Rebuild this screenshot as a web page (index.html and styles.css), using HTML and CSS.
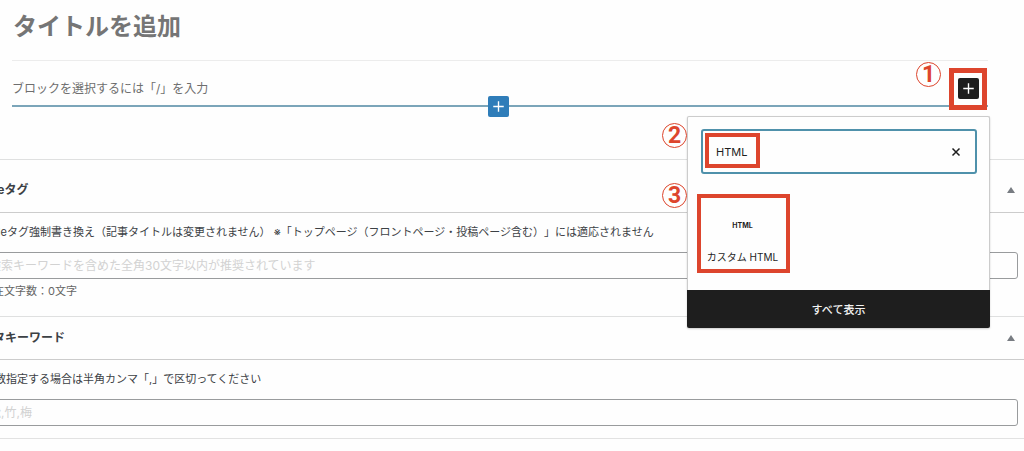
FILE: index.html
```html
<!DOCTYPE html>
<html lang="ja">
<head>
<meta charset="utf-8">
<meta name="viewport" content="width=device-width, initial-scale=1">
<title>投稿を編集</title>
<link rel="stylesheet" href="styles.css">
</head>
<body>
<main class="page">
  <section class="editor">
    <h1 class="post-title">タイトルを追加</h1>
    <div class="block-row">
      <p class="block-prompt">ブロックを選択するには「/」を入力</p>
      <span class="step step-one">1</span>
      <button class="add add-dark marked" type="button" aria-label="ブロックを追加">
        <svg viewBox="0 0 20 20" aria-hidden="true"><path d="M10 5v10M5 10h10"/></svg>
      </button>
      <button class="add add-blue" type="button" aria-label="ここにブロックを追加">
        <svg viewBox="0 0 20 20" aria-hidden="true"><path d="M10 5v10M5 10h10"/></svg>
      </button>
      <div class="inserter">
        <span class="step step-two">2</span>
        <span class="step step-three">3</span>
        <div class="inserter-body">
          <div class="search">
            <input class="search-input" type="text" value="HTML" aria-label="ブロックを検索">
            <button class="clear" type="button" aria-label="検索をリセット">
              <svg viewBox="0 0 10 10" aria-hidden="true"><path d="M1.5 1.5l7 7M8.5 1.5l-7 7"/></svg>
            </button>
          </div>
          <button class="result marked" type="button">
            <span class="result-icon" aria-hidden="true">HTML</span>
            <span>カスタム HTML</span>
          </button>
        </div>
        <button class="show-all" type="button">すべて表示</button>
      </div>
    </div>
  </section>

  <div class="metaboxes">
    <section class="metabox">
      <header class="metabox-head metabox-head-first">
        <h2 class="metabox-title">titleタグ</h2>
        <button class="toggle" type="button" aria-label="パネルを閉じる"><svg viewBox="0 0 8 6" aria-hidden="true"><path d="M4 0l4 6H0z"/></svg></button>
      </header>
      <div class="metabox-body">
        <label class="field-label" for="title-tag">titleタグ強制書き換え（記事タイトルは変更されません） ※「トップページ（フロントページ・投稿ページ含む）」には適応されません</label>
        <input class="field" id="title-tag" type="text" placeholder="検索キーワードを含めた全角30文字以内が推奨されています">
        <p class="count">現在文字数：0文字</p>
      </div>
    </section>
    <section class="metabox">
      <header class="metabox-head">
        <h2 class="metabox-title">メタキーワード</h2>
        <button class="toggle" type="button" aria-label="パネルを閉じる"><svg viewBox="0 0 8 6" aria-hidden="true"><path d="M4 0l4 6H0z"/></svg></button>
      </header>
      <div class="metabox-body">
        <label class="field-label" for="keywords">複数指定する場合は半角カンマ「,」で区切ってください</label>
        <input class="field" id="keywords" type="text" placeholder="松,竹,梅">
      </div>
    </section>
  </div>
</main>
</body>
</html>
```
FILE: styles.css
```css
*,
*::after {
  box-sizing: border-box;
}

body {
  margin: 0;
  background: #fefefe;
  color: #3c4145;
  font-family: Inter, "Noto Sans CJK JP", sans-serif;
  font-size: 11px;
  text-spacing-trim: space-all;
  overflow: hidden;
}

button,
input {
  font: inherit;
  color: inherit;
}

button {
  padding: 0;
  border: 0;
  background: none;
}

svg {
  display: block;
}

.page {
  overflow: hidden;
}

.editor {
  padding: 0 36px 52px 12px;
}

.post-title {
  margin: 0;
  padding: 9px 1px 15px;
  border-bottom: 1px solid #ececec;
  color: #757575;
  font-size: 24px;
  font-weight: 700;
  line-height: 36px;
}

.block-row {
  position: relative;
  display: flex;
  align-items: center;
  height: 46px;
  padding: 0 9px 0 0;
  border-bottom: 2px solid #7ba5b9;
  color: #6e6e6e;
}

.block-prompt {
  flex: 1;
  margin: 0;
  padding-top: 12px;
  font-size: 12px;
  line-height: 18px;
}

.add {
  display: grid;
  place-items: center;
  width: 21px;
  height: 21px;
  border-radius: 2px;
}

.add svg {
  width: 21px;
  height: 21px;
  fill: none;
  stroke: #fff;
  stroke-width: 1.3;
}

.add-dark {
  position: relative;
  z-index: 1;
  margin-top: 10px;
  background: #1e1e1e;
}

.add-blue {
  position: absolute;
  left: 50%;
  bottom: -12px;
  margin-left: -12px;
  background: #2f7db9;
}

.marked::after {
  content: "";
  position: absolute;
  border: 4px solid #dd452d;
}

.add-dark::after {
  inset: -10px -8px -11px -9px;
  border-width: 5px;
  box-shadow: inset 0 0 0 20px #fefefe00;
}

.step {
  position: absolute;
  width: 25px;
  height: 25px;
  border: 1px solid #dd452d;
  border-radius: 50%;
  color: #dd452d;
  font-family: Roboto, sans-serif;
  font-size: 23px;
  font-weight: 700;
  line-height: 24px;
  text-align: center;
}

.step-one {
  top: 1px;
  right: 47px;
}

.step-two {
  top: 6px;
  left: -26px;
}

.step-three {
  top: 66px;
  left: -26px;
}

.inserter {
  position: absolute;
  top: 55px;
  right: -2px;
  z-index: 1;
  width: 303px;
  border: 1px solid #ccc;
  border-bottom: 0;
  border-radius: 2px;
  background: #fefefe;
  color: #1e1e1e;
  box-shadow: 0 1px 2px #0003;
}

.inserter-body {
  padding: 12px 12px 25px 13px;
}

.search {
  position: relative;
  display: flex;
  align-items: center;
  height: 45px;
  margin-bottom: 24px;
  padding-right: 14px;
  border: 2px solid #4f91ab;
  border-radius: 3px;
}

.search::after {
  content: "";
  position: absolute;
  top: 2px;
  left: 2px;
  width: 55px;
  height: 35px;
  border: 4px solid #dd452d;
  pointer-events: none;
}

.search-input {
  flex: 1;
  min-width: 0;
  padding: 0 0 0 13px;
  border: 0;
  outline: 0;
  background: none;
}

.clear svg {
  width: 10px;
  height: 10px;
  fill: none;
  stroke: #1e1e1e;
  stroke-width: 1.5;
}

.result {
  position: relative;
  display: flex;
  flex-direction: column;
  align-items: center;
  width: 83px;
  padding-top: 24px;
  font-size: 10px;
  line-height: 16px;
}

.result::after {
  inset: -4px -6px -8px -4px;
}

.result-icon {
  margin-bottom: 19px;
  font-size: 7px;
  font-weight: 700;
  line-height: 8px;
}

.show-all {
  display: block;
  width: calc(100% + 2px);
  height: 38px;
  margin: 0 -1px;
  border-radius: 0 0 2px 2px;
  background: #1e1e1e;
  color: #f2f2f2;
  font-weight: 500;
}

.metaboxes {
  margin-left: -22px;
  border-bottom: 1px solid #e2e2e2;
}

.metabox {
  border-top: 1px solid #dfe0e0;
}

.metabox-head {
  display: flex;
  align-items: center;
  justify-content: space-between;
  height: 43px;
  padding: 0 9px 0 4px;
  border-bottom: 1px solid #ccc;
}

.metabox-head-first {
  height: 53px;
  padding-top: 8px;
}

.metabox-title {
  margin: 0;
  font-size: 12px;
  font-weight: 700;
  line-height: 18px;
}

.metabox:last-child .metabox-title {
  margin-left: -1px;
}

.toggle svg {
  width: 8px;
  height: 6px;
  fill: #787c82;
}

.metabox-body {
  padding: 11px 6px 12px 8px;
}

.field-label {
  display: block;
  margin: 0 0 12px 2px;
  line-height: 16px;
  white-space: nowrap;
}

.metabox:last-child .field-label {
  margin-left: -2px;
}

.field {
  display: block;
  width: 100%;
  height: 27px;
  padding: 0 2px;
  border: 1px solid #999b9d;
  border-radius: 3px;
  background: #fefefe;
  font-size: 12px;
}

.field::placeholder {
  color: #d2d2d2;
  opacity: 1;
}

.count {
  margin: 4px 0 5px -4px;
  color: #666;
  line-height: 16px;
}
```
